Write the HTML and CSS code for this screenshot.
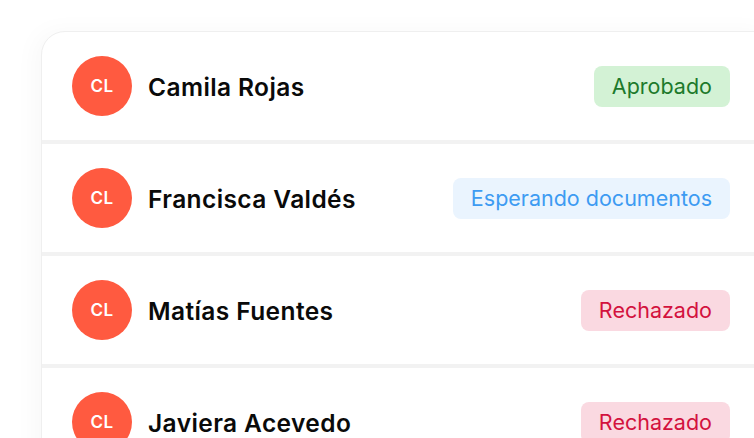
FILE: index.html
```html
<!DOCTYPE html>
<html lang="es">
<head>
<meta charset="utf-8">
<link rel="stylesheet" href="styles.css">
</head>
<body>
<div class="page">
  <div class="card">
    <div class="row">
      <div class="person"><div class="avatar">CL</div><span class="name">Camila Rojas</span></div>
      <span class="badge ok">Aprobado</span>
    </div>
    <div class="row">
      <div class="person"><div class="avatar">CL</div><span class="name">Francisca Valdés</span></div>
      <span class="badge wait">Esperando documentos</span>
    </div>
    <div class="row">
      <div class="person"><div class="avatar">CL</div><span class="name">Matías Fuentes</span></div>
      <span class="badge no">Rechazado</span>
    </div>
    <div class="row">
      <div class="person"><div class="avatar">CL</div><span class="name">Javiera Acevedo</span></div>
      <span class="badge no">Rechazado</span>
    </div>
  </div>
</div>
</body>
</html>
```
FILE: styles.css
```css
html, body { margin: 0; padding: 0; background: #fff; }
body { font-family: "Inter", "Noto Sans", sans-serif; }
.page {
  width: 754px; height: 438px; overflow: hidden;
  padding: 31px 0 0 41px; box-sizing: border-box;
}
.card {
  width: 736px;
  background: #fff;
  border: 1px solid #efefef;
  border-radius: 24px 24px 0 0;
  box-shadow: -6px 0 24px rgba(0,0,0,0.03);
  display: flex; flex-direction: column;
}
.row {
  height: 108px;
  display: flex; align-items: center; justify-content: space-between;
  padding: 0 48px 0 30px;
  border-bottom: 4px solid #f2f2f2;
}
.person { display: flex; align-items: center; gap: 16px; }
.avatar {
  width: 60px; height: 60px; border-radius: 50%;
  background: #ff5a40; color: #fff;
  display: flex; align-items: center; justify-content: center;
  font-size: 17px; font-weight: 600; letter-spacing: 0.5px;
}
.name { font-size: 24.5px; font-weight: 600; color: #0a0a0a; letter-spacing: 0.4px; padding-top: 2px; }
.badge {
  height: 41px; box-sizing: border-box;
  display: inline-flex; align-items: center;
  padding: 0 18px; border-radius: 8px;
  font-size: 21.5px; font-weight: 400;
}
.ok { background: #d3f2d5; color: #1d7a2c; }
.wait { background: #eaf4fe; color: #3d9bf2; }
.no { background: #fad9e1; color: #d3123e; }
```
